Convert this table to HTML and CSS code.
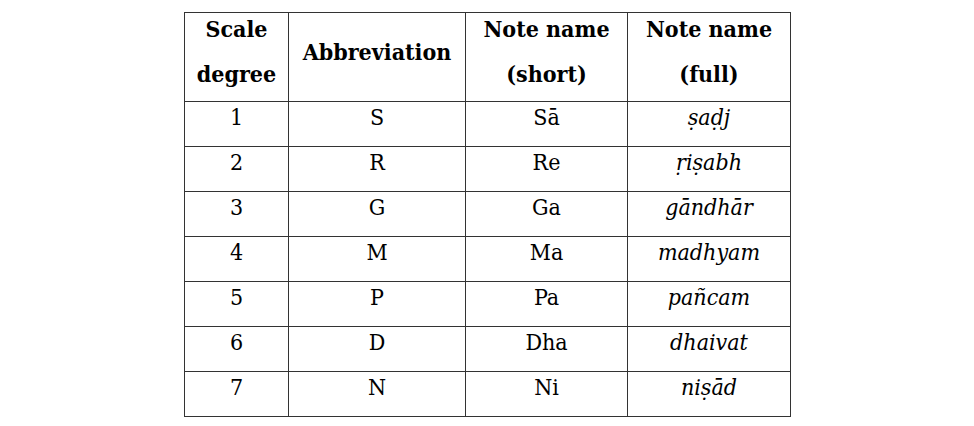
FILE: index.html
```
<!DOCTYPE html>
<html>
<head>
<meta charset="utf-8">
<link rel="stylesheet" href="styles.css">
</head>
<body>
<table class="notes">
  <colgroup>
    <col class="c1"><col class="c2"><col class="c3"><col class="c4">
  </colgroup>
  <thead>
    <tr class="head">
      <th><div class="in">Scale<br>degree</div></th>
      <th><div class="in">Abbreviation</div></th>
      <th><div class="in">Note name<br>(short)</div></th>
      <th><div class="in">Note name<br>(full)</div></th>
    </tr>
  </thead>
  <tbody>
    <tr><td><div class="in">1</div></td><td><div class="in">S</div></td><td><div class="in">Sā</div></td><td class="it"><div class="in">ṣaḍj</div></td></tr>
    <tr><td><div class="in">2</div></td><td><div class="in">R</div></td><td><div class="in">Re</div></td><td class="it"><div class="in">ṛiṣabh</div></td></tr>
    <tr><td><div class="in">3</div></td><td><div class="in">G</div></td><td><div class="in">Ga</div></td><td class="it"><div class="in">gāndhār</div></td></tr>
    <tr><td><div class="in">4</div></td><td><div class="in">M</div></td><td><div class="in">Ma</div></td><td class="it"><div class="in">madhyam</div></td></tr>
    <tr><td><div class="in">5</div></td><td><div class="in">P</div></td><td><div class="in">Pa</div></td><td class="it"><div class="in">pañcam</div></td></tr>
    <tr><td><div class="in">6</div></td><td><div class="in">D</div></td><td><div class="in">Dha</div></td><td class="it"><div class="in">dhaivat</div></td></tr>
    <tr><td><div class="in">7</div></td><td><div class="in">N</div></td><td><div class="in">Ni</div></td><td class="it"><div class="in">niṣād</div></td></tr>
  </tbody>
</table>
</body>
</html>
```
FILE: styles.css
```
html, body {
  margin: 0;
  padding: 0;
  background: #ffffff;
}
body {
  padding-top: 12px;
  font-family: "DejaVu Serif", "Liberation Serif", serif;
  font-stretch: condensed;
  color: #000000;
}
.notes {
  border-collapse: collapse;
  margin-left: 184px;
  table-layout: fixed;
  width: 606px;
}
.c1 { width: 104px; }
.c2 { width: 177px; }
.c3 { width: 162px; }
.c4 { width: 163px; }
.notes th,
.notes td {
  border: 1px solid #333333;
  padding: 0 0 6px;
  text-align: center;
  vertical-align: middle;
  line-height: 45px;
  font-size: 23px;
  font-weight: normal;
}
.notes th {
  font-weight: bold;
  padding-bottom: 5px;
}
.in {
  margin-top: -7px;
}
.notes td.it {
  font-style: italic;
}
```
